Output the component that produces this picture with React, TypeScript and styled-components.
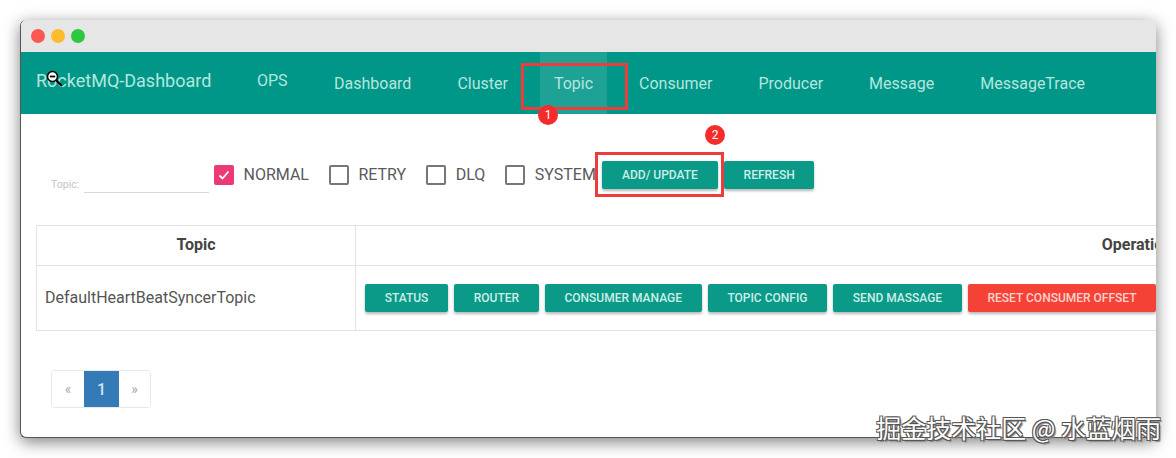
import React from "react";
import styled, { createGlobalStyle } from "styled-components";

const Global = createGlobalStyle`
  html, body { margin: 0; padding: 0; background: #fff; overflow: hidden; }
  body { font-family: Roboto, "Liberation Sans", sans-serif; }
`;

const Page = styled.div`
  width: 1176px;
  height: 458px;
  padding: 20px 20px 20px;
  box-sizing: border-box;
  position: relative;
  overflow: hidden;
`;

const Window = styled.div`
  position: relative;
  height: 418px;
  display: flex;
  flex-direction: column;
  background: #fff;
  border-radius: 6px;
  border-left: 1px solid #555;
  border-bottom: 1px solid #555;
  box-sizing: border-box;
  box-shadow: 0 4px 16px rgba(0, 0, 0, 0.5);
`;

const Clip = styled.div`
  flex: 1;
  min-height: 0;
  display: flex;
  flex-direction: column;
  border-radius: 6px;
  overflow: hidden;
`;

const TitleBar = styled.div`
  flex: 0 0 32px;
  display: flex;
  align-items: center;
  gap: 6px;
  padding-left: 10px;
  background: #e6e6e6;
`;

const Dot = styled.span<{ $color: string }>`
  width: 14px;
  height: 14px;
  border-radius: 50%;
  background: ${(p) => p.$color};
`;

const Nav = styled.nav`
  flex: 0 0 62px;
  display: flex;
  align-items: center;
  background: #009688;
  color: #b5e6de;
  padding-left: 15px;
`;

const Brand = styled.span`
  font-size: 18px;
  width: 221px;
  margin-top: -6px;
  white-space: nowrap;
`;

const Ops = styled.span`
  font-size: 16px;
  width: 63px;
  margin-top: -6px;
`;

const NavItem = styled.span<{ $active?: boolean }>`
  font-size: 16px;
  height: 100%;
  display: flex;
  align-items: center;
  padding: 0 14px;
  margin-right: 18px;
  background: ${(p) => (p.$active ? "rgba(255,255,255,0.12)" : "transparent")};
`;

const Content = styled.div`
  flex: 1;
  padding: 47px 0 0 15px;
`;

const Toolbar = styled.div`
  display: flex;
  align-items: flex-start;
  height: 32px;
  padding-left: 15px;
`;

const SearchField = styled.div`
  width: 163px;
  height: 32px;
  display: flex;
  align-items: flex-end;
  gap: 5px;
`;

const SearchLabel = styled.label`
  font-size: 10.5px;
  line-height: 16px;
  color: #c4c4c4;
`;

const SearchLine = styled.span`
  flex: 0 0 125px;
  height: 1px;
  background: #d8d8d8;
`;

const CheckRow = styled.div`
  display: flex;
  align-items: center;
  gap: 9.5px;
  height: 28px;
  margin-right: 20px;
  font-size: 16px;
  color: #5a5a5a;
`;

const CheckText = styled.span`
  margin-top: -2px;
`;

const Box = styled.span<{ $checked?: boolean }>`
  width: 20px;
  height: 20px;
  box-sizing: border-box;
  border-radius: 2px;
  display: flex;
  align-items: center;
  justify-content: center;
  background: ${(p) => (p.$checked ? "#ec3a73" : "transparent")};
  border: ${(p) => (p.$checked ? "none" : "2px solid #777")};
`;

const Actions = styled.div`
  display: flex;
  gap: 6px;
  margin-left: -14px;
`;

const Btn = styled.button<{ $danger?: boolean; $wide?: boolean }>`
  height: 28px;
  flex: none;
  width: ${(p) => (p.$wide ? "116px" : "auto")};
  padding: 0 19.7px;
  border: none;
  border-radius: 2px;
  font-family: Roboto, sans-serif;
  font-size: 12px;
  font-weight: 500;
  white-space: nowrap;
  text-transform: uppercase;
  background: ${(p) => (p.$danger ? "#f44336" : "#0a9a87")};
  color: ${(p) => (p.$danger ? "#fcd2ce" : "#cdeee8")};
  box-shadow: 0 2px 3px rgba(0, 0, 0, 0.28);
`;

const Table = styled.table`
  margin-top: 32px;
  width: 1883px;
  table-layout: fixed;
  border-collapse: collapse;
  color: #555;
  font-size: 16px;
`;

const Th = styled.th<{ $w?: number }>`
  height: 40px;
  padding: 0 0 2px;
  box-sizing: border-box;
  border: 1px solid #e2e2e2;
  color: #444;
  font-weight: 700;
  text-align: center;
  width: ${(p) => (p.$w ? `${p.$w}px` : "auto")};
`;

const NameCell = styled.td`
  height: 65px;
  padding: 0 8px 2px;
  box-sizing: border-box;
  border: 1px solid #e2e2e2;
`;

const OpsCell = styled.td`
  padding: 0 9px;
  border: 1px solid #e2e2e2;
`;

const OpsRow = styled.div`
  display: flex;
  gap: 6px;
`;

const Pager = styled.div`
  display: inline-flex;
  margin: 39px 0 0 15px;
  height: 38px;
  border: 1px solid #e8e8e8;
  border-radius: 4px;
  box-sizing: border-box;
  color: #aaa;
  font-size: 13px;
  overflow: hidden;
`;

const PageCell = styled.span<{ $active?: boolean; $w: number }>`
  width: ${(p) => p.$w}px;
  display: flex;
  align-items: center;
  justify-content: center;
  background: ${(p) => (p.$active ? "#337ab7" : "#fff")};
  color: ${(p) => (p.$active ? "#cfe6f7" : "#aaa")};
  font-size: ${(p) => (p.$active ? "16px" : "14px")};
  font-weight: ${(p) => (p.$active ? 500 : 400)};
`;

const Mark = styled.div<{ $x: number; $y: number; $w: number; $h: number }>`
  position: absolute;
  left: ${(p) => p.$x}px;
  top: ${(p) => p.$y}px;
  width: ${(p) => p.$w}px;
  height: ${(p) => p.$h}px;
  box-sizing: border-box;
  border: 3px solid #ee3b3b;
`;

const Badge = styled.span<{ $x: number; $y: number }>`
  position: absolute;
  left: ${(p) => p.$x}px;
  top: ${(p) => p.$y}px;
  width: 20px;
  height: 20px;
  border-radius: 50%;
  background: #f42c2c;
  color: #fff;
  font-size: 12px;
  display: flex;
  align-items: center;
  justify-content: center;
`;

const CursorIcon = styled.svg`
  position: absolute;
  left: 25px;
  top: 50px;
`;

const Watermark = styled.span`
  position: absolute;
  right: 15px;
  bottom: 16px;
  font-family: "Noto Sans CJK SC", sans-serif;
  font-size: 25px;
  line-height: 30px;
  white-space: nowrap;
  color: #fff;
  text-shadow: 1px 1px 0 #555, -1px -1px 0 #555, 1px -1px 0 #555, -1px 1px 0 #555, 2px 2px 1px #888;
`;

const Check = () => (
  <svg width="14" height="14" viewBox="0 0 14 14" fill="none">
    <path d="M2.5 7.5 L5.5 10.5 L11.5 3.5" stroke="#fff" strokeWidth="1.8" />
  </svg>
);

const navItems = ["Dashboard", "Cluster", "Topic", "Consumer", "Producer", "Message", "MessageTrace"];
const checks = ["NORMAL", "RETRY", "DLQ", "SYSTEM"];
const ops = ["Status", "Router", "Consumer Manage", "Topic Config", "Send Massage"];

export default function App() {
  return (
    <Page>
      <Global />
      <Window>
        <Clip>
          <TitleBar>
            <Dot $color="#fc5753" />
            <Dot $color="#fdbc2e" />
            <Dot $color="#2ec840" />
          </TitleBar>
          <Nav>
            <Brand>RocketMQ-Dashboard</Brand>
            <Ops>OPS</Ops>
            {navItems.map((n) => (
              <NavItem key={n} $active={n === "Topic"}>
                {n}
              </NavItem>
            ))}
          </Nav>
          <Content>
            <Toolbar>
              <SearchField>
                <SearchLabel>Topic:</SearchLabel>
                <SearchLine />
              </SearchField>
              {checks.map((c, i) => (
                <CheckRow key={c}>
                  <Box $checked={i === 0}>{i === 0 && <Check />}</Box>
                  <CheckText>{c}</CheckText>
                </CheckRow>
              ))}
              <Actions>
                <Btn $wide>Add/ Update</Btn>
                <Btn>Refresh</Btn>
              </Actions>
            </Toolbar>
            <Table>
              <thead>
                <tr>
                  <Th $w={319}>Topic</Th>
                  <Th>Operation</Th>
                </tr>
              </thead>
              <tbody>
                <tr>
                  <NameCell>DefaultHeartBeatSyncerTopic</NameCell>
                  <OpsCell>
                    <OpsRow>
                      {ops.map((o) => (
                        <Btn key={o}>{o}</Btn>
                      ))}
                      <Btn $danger>Reset Consumer Offset</Btn>
                    </OpsRow>
                  </OpsCell>
                </tr>
              </tbody>
            </Table>
            <Pager>
              <PageCell $w={32}>«</PageCell>
              <PageCell $w={35} $active>
                1
              </PageCell>
              <PageCell $w={31}>»</PageCell>
            </Pager>
          </Content>
        </Clip>
        <CursorIcon width="18" height="18" viewBox="0 0 18 18" fill="none">
          <path d="M10 10 L16 16" stroke="#000" strokeWidth="2.2" />
          <circle cx="6.5" cy="6.5" r="5" fill="#fff" stroke="#000" strokeWidth="1.5" />
          <path d="M3.8 6.5 H9.2" stroke="#000" strokeWidth="1.8" />
        </CursorIcon>
        <Mark $x={500} $y={43} $w={107} $h={47} />
        <Mark $x={574} $y={132} $w={129} $h={45} />
        <Badge $x={517} $y={85}>1</Badge>
        <Badge $x={684} $y={105}>2</Badge>
      </Window>
      <Watermark>掘金技术社区 @ 水蓝烟雨</Watermark>
    </Page>
  );
}
